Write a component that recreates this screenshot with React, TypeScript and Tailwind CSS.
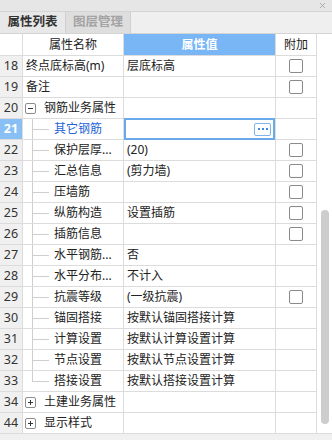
import { X } from "lucide-react";

type Row = {
  n: string;
  name: string;
  value?: string;
  check?: boolean;
  kind?: "top" | "group-open" | "group-closed" | "child" | "child-last";
  selected?: boolean;
};

const rows: Row[] = [
  { n: "18", name: "终点底标高(m)", value: "层底标高", check: true, kind: "top" },
  { n: "19", name: "备注", check: true, kind: "top" },
  { n: "20", name: "钢筋业务属性", kind: "group-open" },
  { n: "21", name: "其它钢筋", kind: "child", selected: true },
  { n: "22", name: "保护层厚...", value: "(20)", check: true, kind: "child" },
  { n: "23", name: "汇总信息", value: "(剪力墙)", check: true, kind: "child" },
  { n: "24", name: "压墙筋", check: true, kind: "child" },
  { n: "25", name: "纵筋构造", value: "设置插筋", check: true, kind: "child" },
  { n: "26", name: "插筋信息", check: true, kind: "child" },
  { n: "27", name: "水平钢筋...", value: "否", kind: "child" },
  { n: "28", name: "水平分布...", value: "不计入", kind: "child" },
  { n: "29", name: "抗震等级", value: "(一级抗震)", check: true, kind: "child" },
  { n: "30", name: "锚固搭接", value: "按默认锚固搭接计算", kind: "child" },
  { n: "31", name: "计算设置", value: "按默认计算设置计算", kind: "child" },
  { n: "32", name: "节点设置", value: "按默认节点设置计算", kind: "child" },
  { n: "33", name: "搭接设置", value: "按默认搭接设置计算", kind: "child-last" },
  { n: "34", name: "土建业务属性", kind: "group-closed" },
  { n: "44", name: "显示样式", kind: "group-closed" },
];

function ToggleBox({ open }: { open: boolean }) {
  return (
    <span className="w-[11px] h-[11px] border border-[#8c8c8c] rounded-[2px] bg-white flex items-center justify-center shrink-0">
      <svg width="7" height="7" viewBox="0 0 7 7">
        <path d="M1 3.5h5" stroke="#333" strokeWidth="1" />
        {!open && <path d="M3.5 1v5" stroke="#333" strokeWidth="1" />}
      </svg>
    </span>
  );
}

function NameCell({ row }: { row: Row }) {
  const isChild = row.kind === "child" || row.kind === "child-last";
  if (row.kind === "group-open" || row.kind === "group-closed") {
    return (
      <div className="flex items-center gap-[8px] pl-[2px] h-full">
        <ToggleBox open={row.kind === "group-open"} />
        <span>{row.name}</span>
      </div>
    );
  }
  if (isChild) {
    return (
      <div className="relative flex items-center pl-[31px] h-full">
        {/* tree lines */}
        <span
          className={`absolute left-[9px] top-[-1px] w-px bg-[#cfcfcf] ${
            row.kind === "child-last" ? "h-[11px]" : "h-[21px]"
          }`}
        />
        <span className="absolute left-[9px] top-[10px] w-[17px] h-px bg-[#cfcfcf]" />
        <span className={row.selected ? "text-[#2563d6]" : ""}>{row.name}</span>
      </div>
    );
  }
  return <div className="flex items-center pl-[3px] h-full">{row.name}</div>;
}

export default function App() {
  return (
    <div className="w-[332px] h-[440px] bg-[#f0f0f0] text-[12px] text-[#222] font-['Noto_Sans','Noto_Sans_CJK_SC',sans-serif] flex flex-col overflow-hidden">
      {/* Title bar */}
      <div className="h-[12px] bg-[#e6e6e6] border-b border-[#d4d4d4] flex items-center justify-end pr-[5px]">
        <X size={9} strokeWidth={2} className="text-[#9a9a9a]" />
      </div>

      {/* Tabs */}
      <div className="h-[22px] bg-[#efefef] border-b border-[#d4d4d4] flex">
        <div className="w-[66px] bg-[#e8e8e8] border-r border-[#d0d0d0] flex items-center justify-center font-bold text-[#333] text-[12.5px]">
          属性列表
        </div>
        <div className="w-[65px] bg-[#dedede] border-r border-[#d0d0d0] flex items-center justify-center font-bold text-[#a3a3a3] text-[12.5px]">
          图层管理
        </div>
      </div>

      {/* Grid */}
      <div className="flex">
        <div className="w-[317px] flex flex-col">
          {/* header */}
          <div className="flex h-[22px] bg-white">
            <div className="w-[23px] border-r border-b border-[#dcdcdc]" />
            <div className="w-[101px] border-r border-b border-[#dcdcdc] flex items-center justify-center">
              属性名称
            </div>
            <div className="w-[152px] border-r border-b border-[#dcdcdc] bg-[#78b6f5] flex items-center justify-center text-white font-bold">
              属性值
            </div>
            <div className="w-[41px] border-r border-b border-[#dcdcdc] flex items-center justify-center">
              附加
            </div>
          </div>

          {rows.map((row) => (
            <div key={row.n} className="flex h-[21px] bg-white leading-[20px]">
              <div
                className={`w-[23px] border-r border-b border-[#dcdcdc] flex items-center justify-center text-[12.5px] ${
                  row.selected ? "bg-[#88c0f6] text-white font-bold" : "bg-[#f0f0f0] text-[#333]"
                }`}
              >
                {row.n}
              </div>
              <div className="w-[101px] border-r border-b border-[#dcdcdc] whitespace-nowrap overflow-hidden">
                <NameCell row={row} />
              </div>
              <div className="relative w-[152px] border-r border-b border-[#dcdcdc] flex items-center pl-[3px] whitespace-nowrap">
                {row.value}
                {row.selected && (
                  <div className="absolute top-[-1px] bottom-[-1px] left-0 right-0 border-2 border-[#6aa9ea] flex items-center justify-end pr-[2px]">
                    <div className="w-[17px] h-[13px] border border-[#7fb4ea] rounded-[2px] bg-white flex items-center justify-center gap-[2px]">
                      <span className="w-[2px] h-[2px] bg-[#3d8be0]" />
                      <span className="w-[2px] h-[2px] bg-[#3d8be0]" />
                      <span className="w-[2px] h-[2px] bg-[#3d8be0]" />
                    </div>
                  </div>
                )}
              </div>
              <div className="w-[41px] border-r border-b border-[#dcdcdc] flex items-center justify-center">
                {row.check && (
                  <span className="w-[14px] h-[14px] border border-[#8a8a8a] rounded-[2px] bg-white" />
                )}
              </div>
            </div>
          ))}
        </div>

        {/* Scrollbar */}
        <div className="w-[15px] bg-white flex flex-col items-center pt-[176px] pb-[9px] border-b border-[#dcdcdc]">
          <div className="w-[8px] flex-1 rounded-full bg-[#cdcdcd]" />
        </div>
      </div>
    </div>
  );
}
